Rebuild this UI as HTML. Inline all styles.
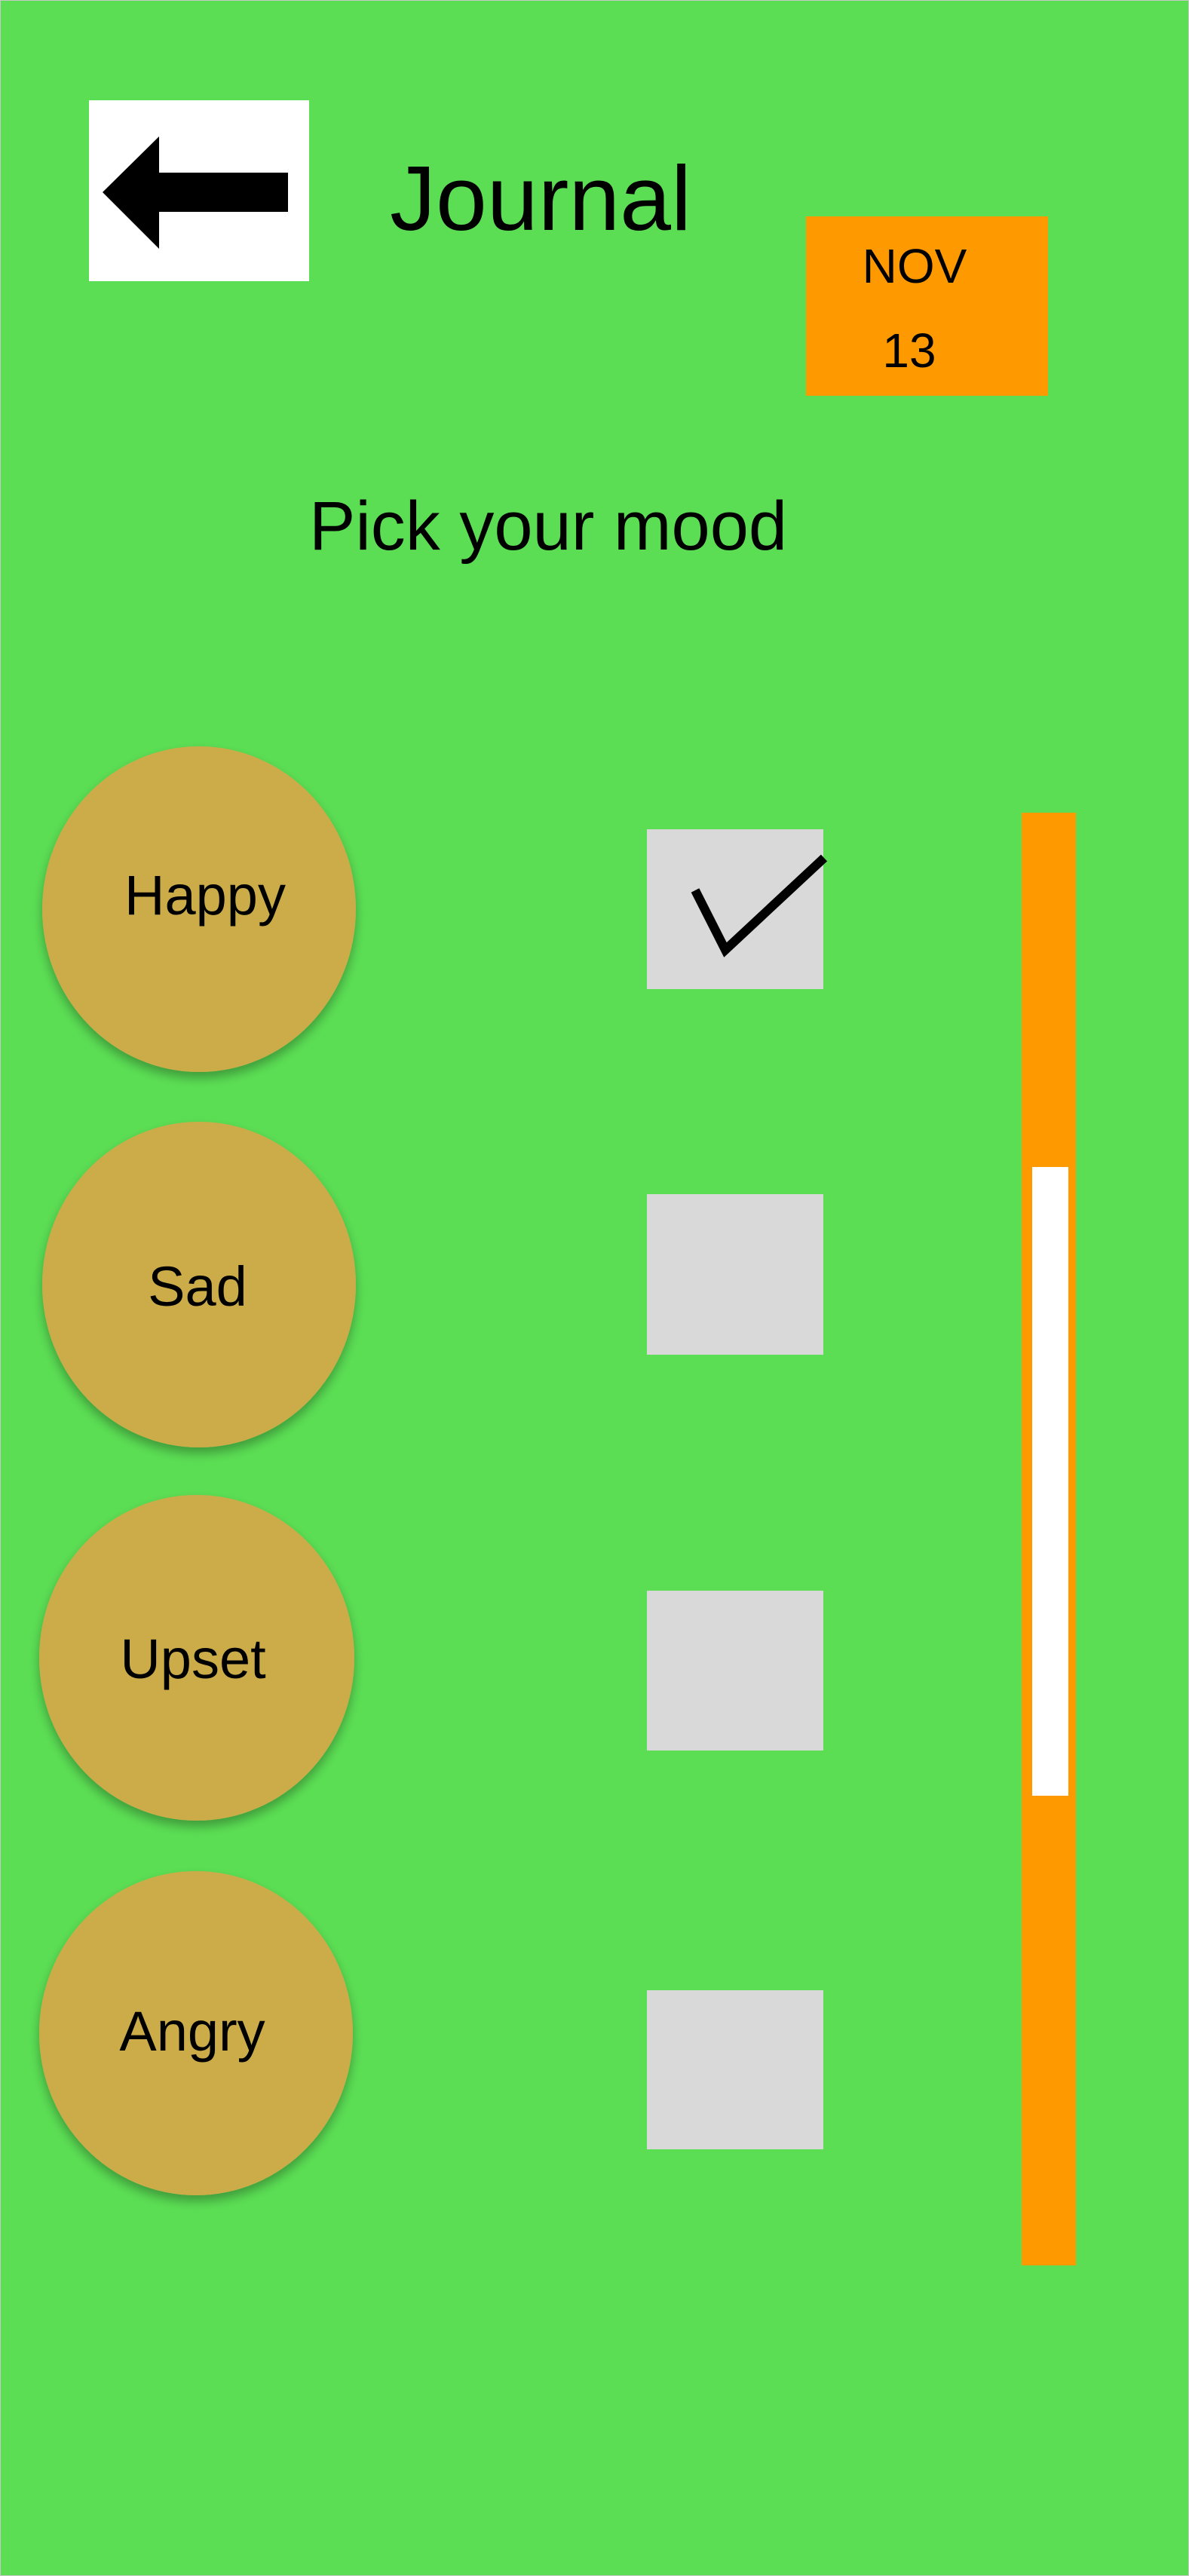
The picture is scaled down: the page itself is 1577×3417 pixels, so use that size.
<!DOCTYPE html>
<html><head><meta charset="utf-8"><style>
html,body{margin:0;padding:0;background:#5BDE54;}
svg{display:block;}
text{font-family:"Liberation Sans",Arial,sans-serif;fill:#000;}
</style></head><body>
<svg width="1577" height="3417" viewBox="0 0 1577 3417" xmlns="http://www.w3.org/2000/svg">
<defs>
<filter id="sh" x="-20%" y="-20%" width="140%" height="150%">
<feDropShadow dx="0" dy="8" stdDeviation="7" flood-color="#000" flood-opacity="0.3"/>
</filter>
</defs>
<rect x="0" y="0" width="1577" height="3417" fill="#5BDE54" stroke="#c8c8c8" stroke-width="2"/>
<rect x="118" y="133" width="292" height="240" fill="#fff"/>
<polygon points="136,255 211,181 211,229 382,229 382,281 211,281 211,330" fill="#000"/>
<text x="517" y="305" font-size="122">Journal</text>
<rect x="1069" y="287" width="321" height="238" fill="#FF9900"/>
<text x="1213" y="375" font-size="64" text-anchor="middle">NOV</text>
<text x="1206" y="487" font-size="64" text-anchor="middle">13</text>
<text x="410" y="729" font-size="92">Pick your mood</text>
<g filter="url(#sh)" fill="#CBAC4A">
<ellipse cx="264" cy="1206" rx="208" ry="216"/>
<ellipse cx="264" cy="1704" rx="208" ry="216"/>
<ellipse cx="261" cy="2199" rx="209" ry="216"/>
<ellipse cx="260" cy="2697" rx="208" ry="215"/>
</g>
<text x="272" y="1213" font-size="74" text-anchor="middle">Happy</text>
<text x="262" y="1732" font-size="74" text-anchor="middle">Sad</text>
<text x="256" y="2226" font-size="74" text-anchor="middle">Upset</text>
<text x="255" y="2720" font-size="74" text-anchor="middle">Angry</text>
<rect x="858" y="1100" width="234" height="212" fill="#D9D9D9"/>
<rect x="858" y="1584" width="234" height="213" fill="#D9D9D9"/>
<rect x="858" y="2110" width="234" height="212" fill="#D9D9D9"/>
<rect x="858" y="2640" width="234" height="211" fill="#D9D9D9"/>
<polyline points="922,1181 962,1260 1093,1138" fill="none" stroke="#000" stroke-width="12"/>
<rect x="1355" y="1078" width="72" height="1927" fill="#FF9900"/>
<rect x="1369" y="1548" width="48" height="834" fill="#fff"/>
</svg>
</body></html>
